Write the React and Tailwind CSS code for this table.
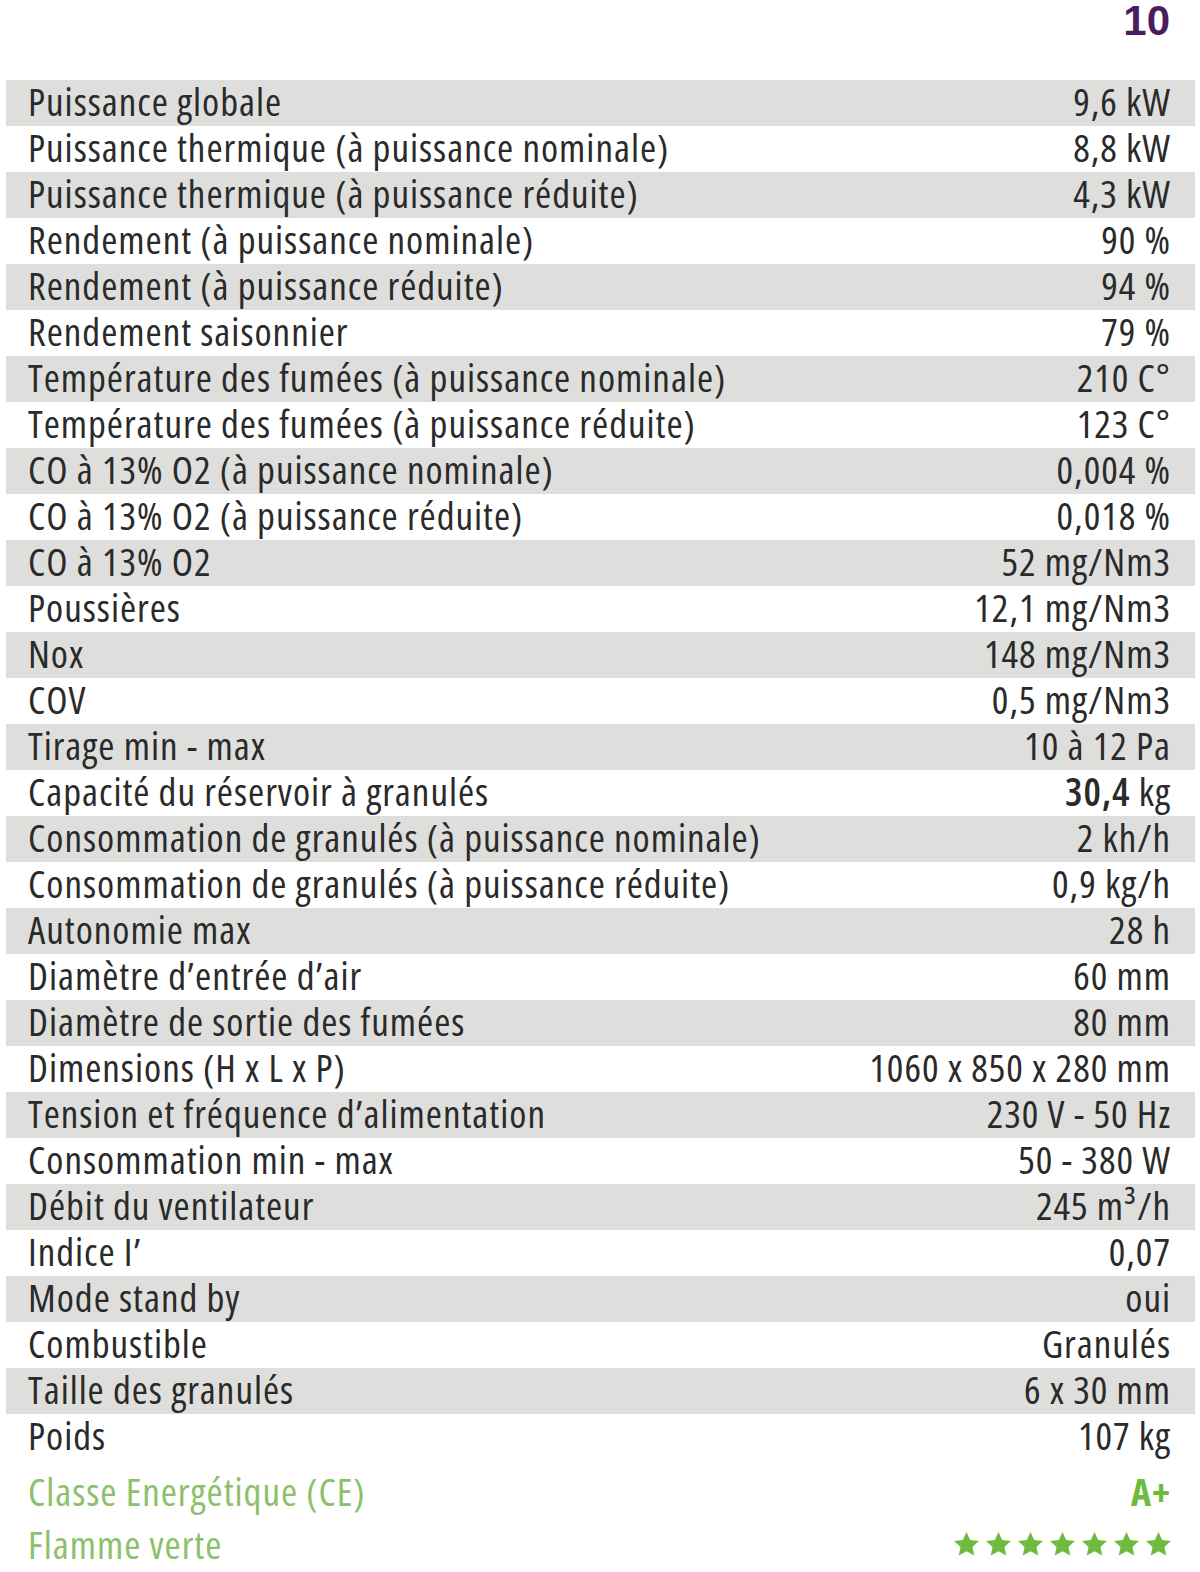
const rows = [
  ['Puissance globale', '9,6 kW'],
  ['Puissance thermique (à puissance nominale)', '8,8 kW'],
  ['Puissance thermique (à puissance réduite)', '4,3 kW'],
  ['Rendement (à puissance nominale)', '90 %'],
  ['Rendement (à puissance réduite)', '94 %'],
  ['Rendement saisonnier', '79 %'],
  ['Température des fumées (à puissance nominale)', '210 C°'],
  ['Température des fumées (à puissance réduite)', '123 C°'],
  ['CO à 13% O2 (à puissance nominale)', '0,004 %'],
  ['CO à 13% O2 (à puissance réduite)', '0,018 %'],
  ['CO à 13% O2', '52 mg/Nm3'],
  ['Poussières', '12,1 mg/Nm3'],
  ['Nox', '148 mg/Nm3'],
  ['COV', '0,5 mg/Nm3'],
  ['Tirage min - max', '10 à 12 Pa'],
  ['Capacité du réservoir à granulés', null],
  ['Consommation de granulés (à puissance nominale)', '2 kh/h'],
  ['Consommation de granulés (à puissance réduite)', '0,9 kg/h'],
  ['Autonomie max', '28 h'],
  ['Diamètre d’entrée d’air', '60 mm'],
  ['Diamètre de sortie des fumées', '80 mm'],
  ['Dimensions (H x L x P)', '1060 x 850 x 280 mm'],
  ['Tension et fréquence d’alimentation', '230 V - 50 Hz'],
  ['Consommation min - max', '50 - 380 W'],
  ['Débit du ventilateur', '245 m³/h'],
  ['Indice I’', '0,07'],
  ['Mode stand by', 'oui'],
  ['Combustible', 'Granulés'],
  ['Taille des granulés', '6 x 30 mm'],
  ['Poids', '107 kg'],
]

function Star() {
  return (
    <svg width="27" height="26" viewBox="0 0 24 23" className="shrink-0">
      <path d="M12 0.8l3.3 7.1 7.8.9-5.8 5.3 1.6 7.7L12 17.9l-6.9 3.9 1.6-7.7L.9 8.8l7.8-.9z" fill="#6cbd3e" />
    </svg>
  )
}

export default function App() {
  return (
    <div className="w-[1200px] h-[1572px] bg-white text-[#2a2a2a] font-['Open_Sans','Liberation_Sans',sans-serif] font-stretch-condensed">
      <div className="h-[80px] flex justify-end pr-[30px]">
        <span className="text-[42px] font-bold leading-[42px] text-[#4b1d5f] font-['Liberation_Sans',sans-serif]">10</span>
      </div>

      <div className="pl-[6px] pr-[5px]">
        {rows.map(([label, value], i) => (
          <div
            key={label}
            className={`h-[46px] flex items-center justify-between pl-[22px] pr-[24px] pb-[6px] text-[39px] leading-none tracking-[0.025em] ${
              i % 2 === 0 ? 'bg-[#dededc]' : ''
            }`}
          >
            <span>{label}</span>
            {value === null ? (
              <span><span className="font-semibold">30,4</span> kg</span>
            ) : (
              <span>{value}</span>
            )}
          </div>
        ))}

        <div className="mt-[8px] h-[50px] flex items-center justify-between pl-[22px] pr-[24px] pb-[5px] text-[39px] leading-none tracking-[0.025em] text-[#8dc06a]">
          <span>Classe Energétique (CE)</span>
          <span className="font-bold text-[38px] text-[#6cbd3e]">A+</span>
        </div>
        <div className="h-[52px] flex items-center justify-between pl-[22px] pr-[23px] text-[39px] leading-none tracking-[0.025em] text-[#8dc06a]">
          <span className="pb-[2px]">Flamme verte</span>
          <div className="flex gap-[5px]">
            {[0, 1, 2, 3, 4, 5, 6].map(n => <Star key={n} />)}
          </div>
        </div>
      </div>
    </div>
  )
}
